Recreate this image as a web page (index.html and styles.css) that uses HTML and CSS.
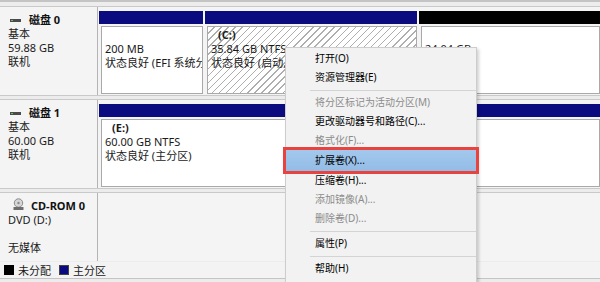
FILE: index.html
```html
<!DOCTYPE html>
<html lang="zh-CN">
<head>
    <meta charset="UTF-8" />
    <title>磁盘管理</title>
    <link rel="stylesheet" href="styles.css">
</head>
<body>

<div class="screen">
    <div class="row-tail"></div>

    <section class="disk">
        <div class="disk-info">
            <div class="disk-name">
                <svg class="ico-hdd" width="12" height="5" viewBox="0 0 12 5"><rect x="0" y="1" width="11" height="3" fill="#4b4b4b"/><rect x="1" y="2" width="2" height="1" fill="#5fc65f"/></svg>
                <b>磁盘 0</b>
            </div>
            <div>基本</div>
            <div>59.88 GB</div>
            <div>联机</div>
        </div>
        <div class="parts">
            <div class="part part-efi">
                <div class="bar bar-primary"></div>
                <div class="part-body">
                    <div class="vol">&nbsp;</div>
                    <div>200 MB</div>
                    <div>状态良好 (EFI 系统分区)</div>
                </div>
            </div>
            <div class="part part-sys">
                <div class="bar bar-primary"></div>
                <div class="part-body hatched">
                    <div class="vol">(C:)</div>
                    <div>35.84 GB NTFS</div>
                    <div>状态良好 (启动, 页面文件, 故障转储, 基本数据分区)</div>
                </div>
            </div>
            <div class="part part-free">
                <div class="bar bar-free"></div>
                <div class="part-body">
                    <div class="vol">&nbsp;</div>
                    <div>24.04 GB</div>
                    <div>未分配</div>
                </div>
            </div>
        </div>
    </section>

    <section class="disk">
        <div class="disk-info">
            <div class="disk-name">
                <svg class="ico-hdd" width="12" height="5" viewBox="0 0 12 5"><rect x="0" y="1" width="11" height="3" fill="#4b4b4b"/><rect x="1" y="2" width="2" height="1" fill="#5fc65f"/></svg>
                <b>磁盘 1</b>
            </div>
            <div>基本</div>
            <div>60.00 GB</div>
            <div>联机</div>
        </div>
        <div class="parts">
            <div class="part part-full">
                <div class="bar bar-primary"></div>
                <div class="part-body">
                    <div class="vol">(E:)</div>
                    <div>60.00 GB NTFS</div>
                    <div>状态良好 (主分区)</div>
                </div>
            </div>
        </div>
    </section>

    <section class="disk disk-cd">
        <div class="disk-info">
            <div class="disk-name">
                <svg class="ico-cd" width="11" height="13" viewBox="0 0 11 13"><circle cx="5.5" cy="5" r="4.2" fill="#d6d6d6" stroke="#8a8a8a" stroke-width="1"/><circle cx="5.5" cy="5" r="1.2" fill="#8a8a8a"/><rect x="0.5" y="9" width="10" height="3" fill="#6e6e6e"/></svg>
                <b>CD-ROM 0</b>
            </div>
            <div>DVD (D:)</div>
            <div>&nbsp;</div>
            <div>无媒体</div>
        </div>
        <div class="parts"></div>
    </section>

    <footer class="legend">
        <span class="swatch swatch-free"></span><span>未分配</span>
        <span class="swatch swatch-primary"></span><span>主分区</span>
    </footer>

    <!-- контекстное меню поверх раздела C: -->
    <ul class="menu">
        <li class="menu-item">打开(O)</li>
        <li class="menu-item">资源管理器(E)</li>
        <li class="menu-sep"></li>
        <li class="menu-item disabled">将分区标记为活动分区(M)</li>
        <li class="menu-item">更改驱动器号和路径(C)...</li>
        <li class="menu-item disabled">格式化(F)...</li>
        <li class="menu-item active">扩展卷(X)...</li>
        <li class="menu-item">压缩卷(H)...</li>
        <li class="menu-item disabled">添加镜像(A)...</li>
        <li class="menu-item disabled">删除卷(D)...</li>
        <li class="menu-sep"></li>
        <li class="menu-item">属性(P)</li>
        <li class="menu-sep"></li>
        <li class="menu-item">帮助(H)</li>
    </ul>
</div>

</body>
</html>
```

FILE: styles.css
```css
body {
    margin: 0;
    font-family: "Noto Sans", "Noto Sans CJK SC", sans-serif;
    font-size: 11px;
    color: #1a1a1a;
    background-color: #ececec;
}
.screen {
    position: relative;
    width: 600px;
    height: 282px;
    overflow: hidden;
}
.row-tail {
    height: 6px;
    box-sizing: border-box;
    border-top: 2px solid #c4c4c4;
    background-color: #ededed;
}
.disk {
    display: grid;
    grid-template-columns: 98px 1fr;
    height: 90px;
    box-sizing: border-box;
    border-top: 1px solid #c9c9c9;
    border-bottom: 1px solid #c9c9c9;
    background-color: #f4f4f4;
    margin-bottom: 3px;
}
.disk-cd {
    height: 69px;
    border-bottom: none;
    margin-bottom: 1px;
}
.disk-info {
    border-right: 1px solid #b4b4b4;
    padding: 6px 0 0 8px;
    line-height: 14px;
    white-space: nowrap;
}
.disk-name {
    display: flex;
    align-items: center;
    gap: 7px;
}
.disk-name b {
    font-weight: bold;
    color: #111;
}
.ico-hdd {
    margin-left: 2px;
}
.ico-cd {
    margin: -3px 0 0 5px;
}
.parts {
    display: flex;
    gap: 2px;
    padding: 4px 0 1px 1px;
    min-width: 0;
}
.part {
    display: flex;
    flex-direction: column;
    min-width: 0;
}
.part-efi {
    width: 104px;
}
.part-sys {
    width: 212px;
}
.part-free,
.part-full {
    flex: 1;
}
.bar {
    height: 13px;
    flex-shrink: 0;
}
.bar-primary {
    background-color: #0b0b80;
}
.bar-free {
    background-color: #000;
}
.part-body {
    flex: 1;
    margin: 2px 0 0 2px;
    padding: 1px 3px;
    border: 1px solid #a9a9a9;
    background-color: #fff;
    line-height: 14px;
    white-space: nowrap;
    overflow: hidden;
}
.vol {
    font-weight: bold;
    padding-left: 7px;
}
.hatched {
    background: repeating-linear-gradient(135deg, #fff 0 4px, #aeaeae 4px 5px);
}
.legend {
    display: flex;
    align-items: center;
    gap: 4px;
    height: 16px;
    padding-left: 4px;
    border-bottom: 1px solid #c4c4c4;
    background-color: #f3f3f3;
}
.swatch {
    width: 10px;
    height: 10px;
    box-sizing: border-box;
}
.swatch-free {
    background-color: #000;
}
.swatch-primary {
    margin-left: 4px;
    background-color: #0b0b80;
    border: 1px solid #444;
}
.menu {
    position: absolute;
    left: 285px;
    top: 47px;
    width: 192px;
    height: 250px;
    box-sizing: border-box;
    margin: 0;
    padding: 1px 0 0;
    list-style: none;
    background-color: #f2f2f2;
    border: 1px solid #cdcdcd;
    box-shadow: 2px 2px 3px rgba(0, 0, 0, 0.18);
    font-size: 10px;
    color: #000;
}
.menu-item {
    height: 19px;
    line-height: 19px;
    padding-left: 29px;
    white-space: nowrap;
}
.menu-item.disabled {
    color: #8c8c8c;
}
.menu-item.active {
    height: 21px;
    line-height: 21px;
    background: linear-gradient(#a3c8ec, #93bce6);
    outline: 3px solid #e8433f;
    position: relative;
}
.menu-sep {
    height: 1px;
    margin: 3px 0 2px 24px;
    background-color: #d4d4d4;
}
```
